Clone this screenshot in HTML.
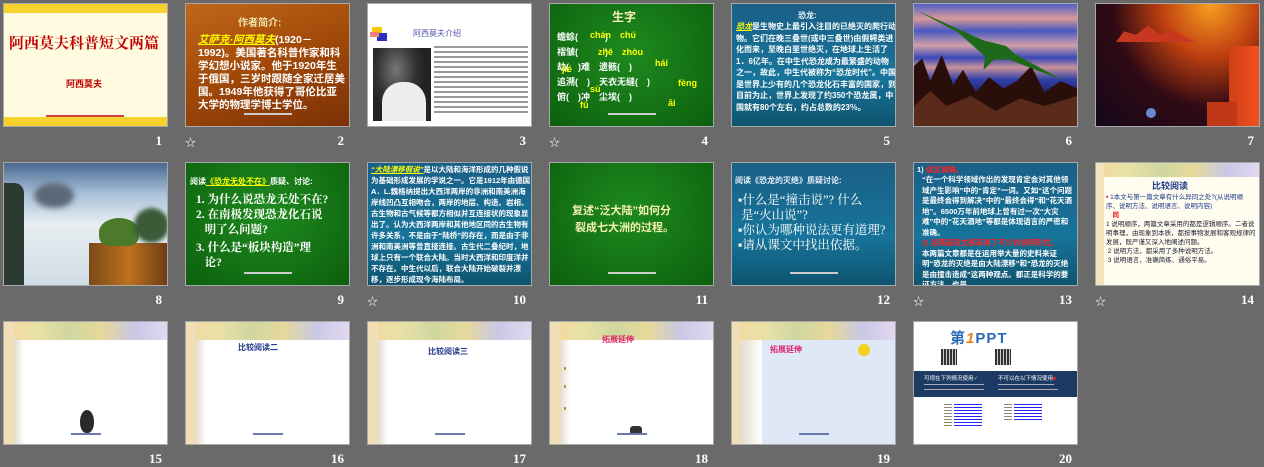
<!DOCTYPE html>
<html><head><meta charset="utf-8"><style>
*{margin:0;padding:0;box-sizing:border-box}
body{width:1264px;height:466px;background:#6a6a6a;position:relative;overflow:hidden;font-family:"Liberation Sans","Noto Sans CJK SC",sans-serif}
.s{position:absolute;width:165px;height:124px;border:1px solid #a8a8a8;overflow:hidden}
.n{position:absolute;width:40px;text-align:right;color:#fff;font:bold 13px "Liberation Serif","Noto Serif CJK SC",serif}
.st{position:absolute;color:#eee;font-size:11px}
.a{position:absolute;white-space:nowrap}
.ft{position:absolute;left:0;right:0;bottom:6px;text-align:center}
.ft i{display:inline-block;width:48px;height:2px;background:#ccc}
.ban{position:absolute;left:0;top:0;right:0;height:18px;background:linear-gradient(90deg,#f4d9a0 0%,#e9e1a6 20%,#cfd7a0 40%,#e6d99a 60%,#c9c8e6 80%,#e2d8f0 100%)}
.lstrip{position:absolute;left:0;top:0;bottom:0;width:10px;background:#f0dfb6}
.shade{position:absolute;left:10px;top:18px;bottom:0;width:10px;background:linear-gradient(90deg,#e3dccc,#fff)}
.blu{color:#1e3a8a}
</style></head><body>

<!-- Row 1 -->
<div class="s" style="left:3px;top:3px;background:#fffbe0">
 <div style="position:absolute;left:0;right:0;top:0;height:9px;background:#f8d22c"></div>
 <div style="position:absolute;left:0;right:0;bottom:0;height:9px;background:#f8d22c"></div>
 <div class="a" style="left:5px;top:28px;color:#c00000;font:bold 15px 'Liberation Serif','Noto Serif CJK SC',serif">阿西莫夫科普短文两篇</div>
 <div class="a" style="left:62px;top:73px;color:#c00000;font-weight:bold;font-size:9px">阿西莫夫</div>
 <div style="position:absolute;left:42px;top:111px;width:78px;height:2px;background:#d04040"></div>
</div>
<div class="n" style="left:122px;top:133px">1</div>

<div class="s" style="left:185px;top:3px;background:linear-gradient(160deg,#c06818,#a04808 50%,#7c3206)">
 <div class="a" style="left:52px;top:10px;color:#f3e6b0;font-weight:bold;font-size:10px">作者简介:</div>
 <div style="position:absolute;left:12px;top:30px;width:148px;color:#fff;font-weight:bold;font-size:10.5px;line-height:13px"><span style="color:#ff0;text-decoration:underline;font-style:italic">艾萨克·阿西莫夫</span>(1920－1992)。美国著名科普作家和科学幻想小说家。他于1920年生于俄国，三岁时跟随全家迁居美国。1949年他获得了哥伦比亚大学的物理学博士学位。</div>
 <div class="ft"><i></i></div>
</div>
<div class="st" style="left:185px;top:134px">☆</div>
<div class="n" style="left:304px;top:133px">2</div>

<div class="s" style="left:367px;top:3px;background:#fff">
 <div style="position:absolute;left:4px;top:23px;width:10px;height:10px;background:#f8c800"></div>
 <div style="position:absolute;left:9px;top:29px;width:10px;height:8px;background:#3030c0"></div>
 <div style="position:absolute;left:2px;top:28px;width:9px;height:5px;background:#f08080"></div>
 <div class="a" style="left:45px;top:24px;color:#5050b0;font-size:8px">阿西莫夫介绍</div>
 <div style="position:absolute;left:5px;top:44px;width:58px;height:73px;background:radial-gradient(ellipse at 40% 30%,#777 0%,#333 40%,#222 60%),#333"></div>
 <div style="position:absolute;left:14px;top:78px;width:44px;height:39px;background:#eee;border-radius:20px 20px 0 0"></div>
 <div style="position:absolute;left:66px;top:42px;width:94px;height:70px;background:repeating-linear-gradient(180deg,#999 0 2px,#fff 2px 5px)"></div>
</div>
<div class="n" style="left:486px;top:133px">3</div>

<div class="s" style="left:549px;top:3px;background:radial-gradient(ellipse at 50% 40%,#1e8a1e,#0d600d)">
 <div class="a" style="left:62px;top:4px;color:#f2f0b0;font-weight:bold;font-size:12px">生字</div>
 <div style="position:absolute;left:7px;top:26px;color:#fff;font-weight:bold;font-size:9px;line-height:15px">蟾蜍(　　　)<br>褶皱(　　　)<br>劫(　)难　遗骸(　)<br>追溯(　)　天衣无缝(　)<br>俯(　)冲　尘埃(　)</div>
 <div class="a" style="left:40px;top:24px;color:#ff0;font-size:9px;font-weight:bold">chán　chú</div>
 <div class="a" style="left:48px;top:41px;color:#ff0;font-size:9px;font-weight:bold">zhě　zhòu</div>
 <div class="a" style="left:105px;top:54px;color:#ff0;font-size:9px;font-weight:bold">hái</div>
 <div class="a" style="left:12px;top:60px;color:#ff0;font-size:9px;font-weight:bold">jié</div>
 <div class="a" style="left:40px;top:80px;color:#ff0;font-size:9px;font-weight:bold">sù</div>
 <div class="a" style="left:128px;top:74px;color:#ff0;font-size:9px;font-weight:bold">fèng</div>
 <div class="a" style="left:30px;top:96px;color:#ff0;font-size:9px;font-weight:bold">fǔ</div>
 <div class="a" style="left:118px;top:94px;color:#ff0;font-size:9px;font-weight:bold">āi</div>
 <div class="ft"><i></i></div>
</div>
<div class="st" style="left:549px;top:134px">☆</div>
<div class="n" style="left:668px;top:133px">4</div>

<div class="s" style="left:731px;top:3px;background:linear-gradient(180deg,#1a5f86,#17749a 60%,#0f5470)">
 <div class="a" style="left:66px;top:6px;color:#e8f0f8;font-weight:bold;font-size:8px">恐龙:</div>
 <div style="position:absolute;left:4px;top:17px;width:160px;color:#fff;font-weight:bold;font-size:8px;line-height:11.5px"><span style="color:#ff0;text-decoration:underline;font-style:italic">恐龙</span>是生物史上最引入注目的已绝灭的爬行动物。它们在晚三叠世(或中三叠世)由假鳄类进化而来，至晚白垩世绝灭，在地球上生活了1．6亿年。在中生代恐龙成为最繁盛的动物之一，故此，中生代被称为“恐龙时代”。中国是世界上少有的几个恐龙化石丰富的国家，到目前为止，世界上发现了约350个恐龙属，中国就有80个左右，约占总数的23％。</div>
</div>
<div class="n" style="left:850px;top:133px">5</div>

<div class="s" style="left:913px;top:3px;background:linear-gradient(180deg,#5060c8 0%,#d89a9a 12%,#4a58c0 22%,#d0a0a8 34%,#3a48b8 44%,#c89098 52%,#3040a8 62%,#202060 75%)">
 <div style="position:absolute;left:0;right:0;bottom:0;height:75px;background:#2a0e0a;clip-path:polygon(0 100%,0 20%,5% 10%,10% 40%,17% 5%,24% 45%,30% 25%,38% 55%,46% 35%,55% 50%,63% 40%,72% 20%,80% 55%,90% 40%,100% 50%,100% 100%)"></div>
 <div style="position:absolute;left:0;right:0;bottom:0;height:50px;background:#5a2a1a;clip-path:polygon(0 100%,0 60%,10% 30%,20% 60%,35% 40%,50% 70%,65% 45%,80% 60%,100% 40%,100% 100%)"></div>
 <div style="position:absolute;left:2px;top:6px;width:150px;height:80px;background:#1f6a1a;clip-path:polygon(0 0,45% 38%,60% 45%,66% 55%,98% 88%,62% 62%,52% 62%,45% 75%,46% 58%,28% 28%)"></div>
</div>
<div class="n" style="left:1032px;top:133px">6</div>

<div class="s" style="left:1095px;top:3px;background:radial-gradient(ellipse at 70% 0%,#f8a020,#c04010 30%,#300a14 60%,#14081a)">
 <div style="position:absolute;left:20px;top:20px;width:80px;height:18px;background:#c83820;clip-path:polygon(0 100%,10% 40%,25% 60%,40% 10%,55% 60%,70% 30%,85% 70%,100% 100%)"></div>
 <div style="position:absolute;right:0;top:42px;width:30px;height:82px;background:linear-gradient(90deg,#d04018,#f05020)"></div>
 <div style="position:absolute;right:22px;top:98px;width:30px;height:26px;background:#c03818"></div>
 <div style="position:absolute;left:50px;top:104px;width:10px;height:10px;border-radius:50%;background:#6a8ad0"></div>
</div>
<div class="n" style="left:1214px;top:133px">7</div>

<!-- Row 2 -->
<div class="s" style="left:3px;top:162px;background:linear-gradient(180deg,#4a6890 0%,#a8c0d8 25%,#e8eef2 50%,#d0dce6 100%)">
 <div style="position:absolute;left:0;top:20px;width:20px;height:104px;background:#2a3a30;border-radius:0 10px 0 0"></div>
 <div style="position:absolute;left:30px;top:20px;width:40px;height:25px;background:#5a6878;border-radius:50%;filter:blur(3px)"></div>
 <div style="position:absolute;left:85px;top:80px;width:80px;height:44px;background:linear-gradient(90deg,#7a4a18,#c07020,#6a3a10)"></div>
 <div style="position:absolute;left:95px;top:55px;width:40px;height:28px;background:#4a7a2a;border-radius:50% 50% 10px 10px"></div>
 <div style="position:absolute;left:130px;top:45px;width:35px;height:35px;background:#3a5a38;border-radius:50%;filter:blur(2px)"></div>
</div>
<div class="n" style="left:122px;top:292px">8</div>

<div class="s" style="left:185px;top:162px;background:radial-gradient(ellipse at 50% 40%,#1e8a1e,#0d600d)">
 <div class="a" style="left:4px;top:13px;color:#fff;font-weight:bold;font-size:8px">阅读<span style="color:#ff0;text-decoration:underline">《恐龙无处不在》</span>质疑、讨论:</div>
 <div style="position:absolute;left:10px;top:30px;width:150px;color:#fff;font-weight:bold;font-size:11.5px;line-height:15px;font-family:'Liberation Serif','Noto Serif CJK SC',serif">1. 为什么说恐龙无处不在?<br>2. 在南极发现恐龙化石说<br>&nbsp;&nbsp;&nbsp;明了么问题?<br><div style="height:3px"></div>3. 什么是“板块构造”理<br>&nbsp;&nbsp;&nbsp;论?</div>
 <div class="ft"><i></i></div>
</div>
<div class="n" style="left:304px;top:292px">9</div>

<div class="s" style="left:367px;top:162px;background:linear-gradient(180deg,#1a5f86,#17749a 60%,#0f5470)">
 <div style="position:absolute;left:3px;top:1px;width:160px;color:#fff;font-weight:bold;font-size:7.5px;line-height:11px"><span style="color:#ff0;text-decoration:underline;font-style:italic">“大陆漂移假说”</span>是以大陆和海洋形成的几种假说为基础形成发展的学说之一。它是1912年由德国A．L.魏格纳提出大西洋两岸的非洲和南美洲海岸线凹凸互相吻合，两岸的地层、构造、岩相、古生物和古气候等都方相似并互连接状的现象显出了。认为大西洋两岸和其他地区同的古生物有许多关系，不是由于“陆桥”的存在，而是由于非洲和南美洲等曾直接连接。古生代二叠纪时，地球上只有一个联合大陆。当时大西洋和印度洋并不存在。中生代以后，联合大陆开始破裂并漂移，逐步形成现今海陆布局。</div>
</div>
<div class="st" style="left:367px;top:293px">☆</div>
<div class="n" style="left:486px;top:292px">10</div>

<div class="s" style="left:549px;top:162px;background:radial-gradient(ellipse at 50% 40%,#1e8a1e,#0d600d)">
 <div class="a" style="left:22px;top:40px;color:#f6f0b0;font-weight:bold;font-size:11px;line-height:17px">复述“泛大陆”如何分<br>&nbsp;裂成七大洲的过程。</div>
 <div class="ft"><i></i></div>
</div>
<div class="n" style="left:668px;top:292px">11</div>

<div class="s" style="left:731px;top:162px;background:linear-gradient(180deg,#1a5f86,#17749a 60%,#0f5470)">
 <div class="a" style="left:3px;top:12px;color:#e8f0f8;font-weight:bold;font-size:8px">阅读《恐龙的灭绝》质疑讨论:</div>
 <div style="position:absolute;left:6px;top:30px;width:160px;color:#fff;font-size:12.5px;line-height:15px;font-family:'Liberation Serif','Noto Serif CJK SC',serif">▪什么是“撞击说”? 什么<br>&nbsp;是“火山说”?<br>▪你认为哪种说法更有道理?<br>▪请从课文中找出依据。</div>
 <div class="ft"><i></i></div>
</div>
<div class="n" style="left:850px;top:292px">12</div>

<div class="s" style="left:913px;top:162px;background:linear-gradient(180deg,#1a5f86,#17749a 60%,#0f5470)">
 <div class="a" style="left:3px;top:1px;color:#fff;font-weight:bold;font-size:7.5px">1) <span style="color:#f22">语言准确。</span></div>
 <div style="position:absolute;left:8px;top:12px;width:153px;color:#fff;font-weight:bold;font-size:7.5px;line-height:10.5px">“在一个科学领域作出的发现肯定会对其他领域产生影响”中的“肯定”一词。又如“这个问题是最终会得到解决”中的“最终会得”和“花天酒地”。6500万年前地球上曾有过一次“大灾难”中的“花天酒地”等都是体现语言的严密和准确。<br><span style="color:#f22">2) 这两篇短文都采用了不少的说明形式。</span><br>本两篇文章都是在运用举大量的史料来证明“恐龙的灭绝是由大陆漂移”和“恐龙的灭绝是由撞击造成”这两种观点。都正是科学的要证方法，也是</div>
</div>
<div class="st" style="left:913px;top:293px">☆</div>
<div class="n" style="left:1032px;top:292px">13</div>

<div class="s" style="left:1095px;top:162px;background:#fffcf0">
 <div class="ban" style="height:14px"></div>
 <div class="lstrip" style="width:8px;background:#f3e4be"></div>
 <div class="a blu" style="left:56px;top:16px;font-weight:bold;font-size:9px">比较阅读</div>
 <div style="position:absolute;left:10px;top:30px;width:150px;font-size:6.5px;line-height:9px;color:#223"><span style="color:#c00">▪</span> <span class="blu">1本文与第一篇文章有什么异同之处?(从说明顺序、说明方法、说明语言、说明内容)</span><br><span style="color:#e00;font-weight:bold">　同</span><br>1 说明顺序，两篇文章采用的都是逻辑顺序。二者说明事理，由现象到本质，都按事物发展和客观规律的发展，既严谨又深入地阐述问题。<br>&nbsp;2 说明方法，都采用了多种说明方法。<br>&nbsp;3 说明语言，准确简练、通俗平易。</div>
</div>
<div class="st" style="left:1095px;top:293px">☆</div>
<div class="n" style="left:1214px;top:292px">14</div>

<!-- Row 3 -->
<div class="s" style="left:3px;top:321px;background:#fff">
 <div class="ban"></div><div class="lstrip"></div><div class="shade"></div>
 <div style="position:absolute;left:76px;top:88px;width:14px;height:23px;background:#2a2a2a;border-radius:50% 50% 45% 45%"></div>
 <div class="ft" style="bottom:4px"><i style="width:30px;background:#6a7ab0"></i></div>
</div>
<div class="n" style="left:122px;top:451px">15</div>

<div class="s" style="left:185px;top:321px;background:#fff">
 <div class="ban"></div><div class="lstrip"></div><div class="shade"></div>
 <div class="a blu" style="left:52px;top:20px;font-weight:bold;font-size:8px">比较阅读二</div>
 <div class="ft" style="bottom:4px"><i style="width:30px;background:#6a7ab0"></i></div>
</div>
<div class="n" style="left:304px;top:451px">16</div>

<div class="s" style="left:367px;top:321px;background:#fff">
 <div class="ban"></div><div class="lstrip"></div><div class="shade"></div>
 <div class="a blu" style="left:60px;top:24px;font-weight:bold;font-size:8px">比较阅读三</div>
 <div class="ft" style="bottom:4px"><i style="width:30px;background:#6a7ab0"></i></div>
</div>
<div class="n" style="left:486px;top:451px">17</div>

<div class="s" style="left:549px;top:321px;background:#fff">
 <div class="ban"></div><div class="lstrip"></div><div class="shade"></div>
 <div class="a" style="left:52px;top:12px;color:#e0206a;font-weight:bold;font-size:8px">拓展延伸</div>
 <div style="position:absolute;left:14px;top:45px;width:2px;height:3px;background:#9a3"></div>
 <div style="position:absolute;left:14px;top:63px;width:2px;height:3px;background:#9a3"></div>
 <div style="position:absolute;left:14px;top:85px;width:2px;height:3px;background:#9a3"></div>
 <div style="position:absolute;left:80px;top:104px;width:12px;height:9px;background:#333;border-radius:3px"></div>
 <div class="ft" style="bottom:4px"><i style="width:30px;background:#6a7ab0"></i></div>
</div>
<div class="n" style="left:668px;top:451px">18</div>

<div class="s" style="left:731px;top:321px;background:#dfe8f6">
 <div class="ban"></div><div class="lstrip" style="width:8px"></div>
 <div style="position:absolute;left:8px;top:18px;width:22px;bottom:0;background:linear-gradient(90deg,#e3dccc,#fff)"></div>
 <div class="a" style="left:38px;top:22px;color:#e0206a;font-weight:bold;font-size:8px">拓展延伸</div>
 <div style="position:absolute;left:126px;top:22px;width:12px;height:12px;border-radius:50%;background:#f6d020"></div>
 <div class="ft" style="bottom:4px"><i style="width:30px;background:#6a7ab0"></i></div>
</div>
<div class="n" style="left:850px;top:451px">19</div>

<div class="s" style="left:913px;top:321px;background:#fff">
 <div class="a" style="left:36px;top:5px;font-weight:bold;font-size:15px;color:#2a6ab8;letter-spacing:1px">第<span style="color:#f08010;font-style:italic">1</span>PPT</div>
 <div style="position:absolute;left:27px;top:27px;width:16px;height:16px;background:repeating-linear-gradient(90deg,#333 0 2px,#ccc 2px 3px)"></div>
 <div style="position:absolute;left:81px;top:27px;width:16px;height:16px;background:repeating-linear-gradient(90deg,#333 0 2px,#ccc 2px 3px)"></div>
 <div style="position:absolute;left:0;right:0;top:49px;height:26px;background:#1c3a64"></div>
 <div class="a" style="left:10px;top:52px;color:#fff;font-size:5.5px">可视在下列情况使用<span style="color:#4c4">✔</span></div>
 <div class="a" style="left:84px;top:52px;color:#fff;font-size:5.5px">不可以在以下情况使用<span style="color:#e22">■</span></div>
 <div style="position:absolute;left:10px;top:62px;width:60px;height:1px;background:#aab"></div>
 <div style="position:absolute;left:10px;top:67px;width:60px;height:1px;background:#aab"></div>
 <div style="position:absolute;left:84px;top:62px;width:56px;height:1px;background:#aab"></div>
 <div style="position:absolute;left:84px;top:67px;width:60px;height:1px;background:#aab"></div>
 <div style="position:absolute;left:30px;top:82px;width:8px;height:22px;background:repeating-linear-gradient(180deg,#887 0 1px,#fff 1px 3px)"></div>
 <div style="position:absolute;left:40px;top:82px;width:28px;height:22px;background:repeating-linear-gradient(180deg,#22f 0 1px,#fff 1px 3px)"></div>
 <div style="position:absolute;left:90px;top:82px;width:8px;height:18px;background:repeating-linear-gradient(180deg,#887 0 1px,#fff 1px 3px)"></div>
 <div style="position:absolute;left:100px;top:82px;width:28px;height:18px;background:repeating-linear-gradient(180deg,#22f 0 1px,#fff 1px 3px)"></div>
</div>
<div class="n" style="left:1032px;top:451px">20</div>

</body></html>
